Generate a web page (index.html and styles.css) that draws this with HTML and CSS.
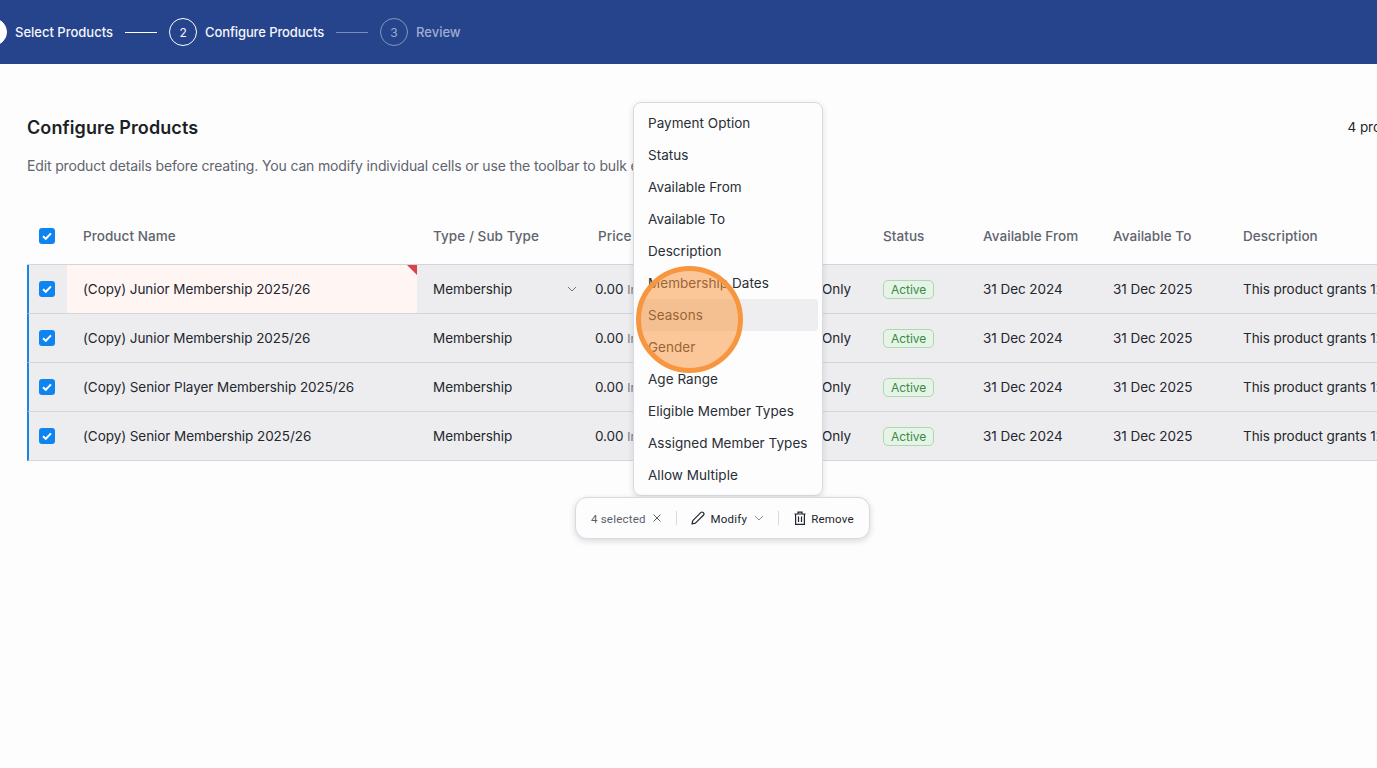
FILE: index.html
```html
<!DOCTYPE html>
<html lang="en">
<head>
<meta charset="utf-8">
<title>Configure Products</title>
<link rel="stylesheet" href="styles.css">
</head>
<body>
<header class="topbar">
  <ol class="stepper">
    <li class="step done"><span class="step-dot"><svg width="14" height="14" viewBox="0 0 14 14"><path d="M3 7l3 3 5-6" fill="none" stroke="#26448c" stroke-width="1.6"/></svg></span><span>Select Products</span></li>
    <li class="step-line"></li>
    <li class="step current"><span class="step-dot">2</span><span>Configure Products</span></li>
    <li class="step-line dim"></li>
    <li class="step upcoming"><span class="step-dot">3</span><span>Review</span></li>
  </ol>
</header>
<main class="content">
  <div class="title-row">
    <h1>Configure Products</h1>
    <span class="count">4 products</span>
  </div>
  <p class="lead">Edit product details before creating. You can modify individual cells or use the toolbar to bulk edit.</p>
  <table class="grid">
    <colgroup><col class="c-check"><col class="c-name"><col class="c-type"><col class="c-price"><col class="c-pay"><col class="c-status"><col class="c-date"><col class="c-date"><col class="c-desc"></colgroup>
    <thead>
      <tr>
        <th><span class="check"><svg width="16" height="16" viewBox="0 0 16 16"><path d="M4 8.2l2.8 2.6L12 5.4" fill="none" stroke="#fff" stroke-width="2"/></svg></span></th>
        <th>Product Name</th><th>Type / Sub Type</th><th>Price</th><th>Payment Option</th><th>Status</th><th>Available From</th><th>Available To</th><th>Description</th>
      </tr>
    </thead>
    <tbody>
      <tr>
        <td><span class="check"><svg width="16" height="16" viewBox="0 0 16 16"><path d="M4 8.2l2.8 2.6L12 5.4" fill="none" stroke="#fff" stroke-width="2"/></svg></span></td>
        <td class="invalid">(Copy) Junior Membership 2025/26<span class="flag"></span></td>
        <td><span class="type-cell">Membership<svg width="10" height="6" viewBox="0 0 10 6"><path d="M1 1l4 4 4-4" fill="none" stroke="#70757e" stroke-width="1"/></svg></span></td>
        <td class="price">0.00 <small>Incl. VAT</small></td>
        <td class="pay">One-time Only</td>
        <td><span class="badge">Active</span></td>
        <td>31 Dec 2024</td><td>31 Dec 2025</td><td>This product grants 12 months of access</td>
      </tr>
      <tr>
        <td><span class="check"><svg width="16" height="16" viewBox="0 0 16 16"><path d="M4 8.2l2.8 2.6L12 5.4" fill="none" stroke="#fff" stroke-width="2"/></svg></span></td>
        <td>(Copy) Junior Membership 2025/26</td>
        <td>Membership</td>
        <td class="price">0.00 <small>Incl. VAT</small></td>
        <td class="pay">One-time Only</td>
        <td><span class="badge">Active</span></td>
        <td>31 Dec 2024</td><td>31 Dec 2025</td><td>This product grants 12 months of access</td>
      </tr>
      <tr>
        <td><span class="check"><svg width="16" height="16" viewBox="0 0 16 16"><path d="M4 8.2l2.8 2.6L12 5.4" fill="none" stroke="#fff" stroke-width="2"/></svg></span></td>
        <td>(Copy) Senior Player Membership 2025/26</td>
        <td>Membership</td>
        <td class="price">0.00 <small>Incl. VAT</small></td>
        <td class="pay">One-time Only</td>
        <td><span class="badge">Active</span></td>
        <td>31 Dec 2024</td><td>31 Dec 2025</td><td>This product grants 12 months of access</td>
      </tr>
      <tr>
        <td><span class="check"><svg width="16" height="16" viewBox="0 0 16 16"><path d="M4 8.2l2.8 2.6L12 5.4" fill="none" stroke="#fff" stroke-width="2"/></svg></span></td>
        <td>(Copy) Senior Membership 2025/26</td>
        <td>Membership</td>
        <td class="price">0.00 <small>Incl. VAT</small></td>
        <td class="pay">One-time Only</td>
        <td><span class="badge">Active</span></td>
        <td>31 Dec 2024</td><td>31 Dec 2025</td><td>This product grants 12 months of access</td>
      </tr>
    </tbody>
  </table>
</main>
<ul class="menu">
  <li>Payment Option</li>
  <li>Status</li>
  <li>Available From</li>
  <li>Available To</li>
  <li>Description</li>
  <li>Membership Dates</li>
  <li class="hover">Seasons</li>
  <li>Gender</li>
  <li>Age Range</li>
  <li>Eligible Member Types</li>
  <li>Assigned Member Types</li>
  <li>Allow Multiple</li>
</ul>
<div class="toolbar">
  <span class="selected">4 selected</span>
  <svg class="close" width="10" height="10" viewBox="0 0 10 10"><path d="M1.5 1.5l7 7M8.5 1.5l-7 7" stroke="#5b606a" stroke-width="1" fill="none"/></svg>
  <span class="sep"></span>
  <svg class="pencil" width="14" height="14" viewBox="0 0 14 14"><path d="M1 13l.8-3.4L10 1.4a1.4 1.4 0 0 1 2 0l.6.6a1.4 1.4 0 0 1 0 2L4.4 12.2 1 13z" fill="none" stroke="#22262c" stroke-width="1.2" stroke-linejoin="round"/></svg>
  <span class="action">Modify</span>
  <svg class="chev" width="10" height="6" viewBox="0 0 10 6"><path d="M1 1l4 4 4-4" fill="none" stroke="#8a8f98" stroke-width="1"/></svg>
  <span class="sep wide"></span>
  <svg class="trash" width="12" height="14" viewBox="0 0 12 14"><path d="M.5 3h11M4 3V1.2h4V3M1.6 3v10.3h8.8V3M4.5 5.5v5.5M7.5 5.5v5.5" fill="none" stroke="#22262c" stroke-width="1.2"/></svg>
  <span class="action">Remove</span>
</div>
<div class="spotlight"></div>
</body>
</html>
```
FILE: styles.css
```css
* { box-sizing: border-box; }
html, body { margin: 0; height: 100%; }
body {
  background: #fdfdfe;
  color: #24272d;
  font-family: Inter, "Liberation Sans", sans-serif;
  font-size: 13.5px;
  letter-spacing: -.06px;
  overflow: hidden;
  position: relative;
}
.topbar {
  height: 64px;
  background: #26448c;
  display: flex;
  align-items: center;
}
.stepper {
  list-style: none;
  margin: 0 0 0 -21px;
  padding: 0;
  display: flex;
  align-items: center;
  gap: 12px;
}
.step {
  display: flex;
  align-items: center;
  gap: 8px;
  font-size: 13px;
  letter-spacing: 0;
  font-weight: 450;
  color: #f4f6fb;
}
.step.current { letter-spacing: -.1px; }
.step-dot {
  width: 28px;
  height: 28px;
  border-radius: 50%;
  border: 1px solid #fff;
  display: flex;
  align-items: center;
  justify-content: center;
  font-size: 12px;
  font-weight: 400;
}
.done .step-dot { background: #fff; }
.upcoming { color: #9fadd0; }
.upcoming .step-dot { border-color: #8796c0; }
.step-line { width: 32px; height: 1px; background: #fff; }
.step-line.dim { background: #7d8dba; }
.content { padding: 52px 0 0 27px; width: 1700px; }
.title-row {
  display: flex;
  width: 1389px;
  justify-content: space-between;
  align-items: center;
  height: 22px;
}
h1 { margin: 0; font-size: 18px; font-weight: 600; letter-spacing: .1px; color: #1c1f24; }
.count { white-space: nowrap; }
.lead { margin: 18px 0 0; font-size: 14px; letter-spacing: -.15px; line-height: 20px; color: #5f646d; }
.grid {
  margin-top: 39px;
  border-collapse: separate;
  border-spacing: 0;
  table-layout: fixed;
  width: 1500px;
}
.c-check { width: 40px; }
.c-name { width: 350px; }
.c-type { width: 165px; }
.c-price { width: 108px; }
.c-pay { width: 177px; }
.c-status { width: 100px; }
.c-date { width: 130px; }
.c-desc { width: 300px; }
th, td {
  padding: 0 16px;
  text-align: left;
  white-space: nowrap;
  overflow: hidden;
}
th {
  height: 50px;
  padding-bottom: 8px;
  font-weight: 500;
  letter-spacing: .06px;
  color: #5f646d;
  border-bottom: 1px solid #d2d5da;
}
td {
  height: 49px;
  background: #ededf0;
  border-bottom: 1px solid #d2d5da;
}
th:first-child, td:first-child { padding-left: 12px; padding-right: 0; }
td:first-child { border-left: 2px solid #1a86e0; padding-left: 10px; }
.check {
  display: block;
  width: 16px;
  height: 16px;
  border-radius: 3px;
  background: #0d84f0;
}
.check svg { display: block; }
td.invalid { background: #fff5f3; position: relative; }
.flag {
  position: absolute;
  top: 0;
  right: 0;
  border-top: 10px solid #d9434e;
  border-left: 10px solid transparent;
}
.type-cell {
  display: flex;
  justify-content: space-between;
  align-items: center;
  margin-right: -11px;
}
.price { padding-left: 13px; }
.price small { font-size: 12px; color: #70757e; }
.pay { text-align: right; }
.badge {
  display: inline-block;
  height: 19px;
  line-height: 17px;
  padding: 0 7px;
  border: 1px solid #a9d9ac;
  border-radius: 5px;
  background: #e6f4e7;
  color: #3a8a45;
  font-size: 12px;
  vertical-align: middle;
}
.menu {
  position: absolute;
  left: 633px;
  top: 102px;
  width: 190px;
  height: 394px;
  margin: 0;
  padding: 4px;
  list-style: none;
  background: #fdfdfe;
  border: 1px solid #d8dade;
  border-radius: 8px;
  box-shadow: 0 2px 6px rgba(20, 25, 40, .12);
  letter-spacing: .04px;
}
.menu li {
  height: 32px;
  line-height: 32px;
  padding-left: 10px;
  border-radius: 4px;
  white-space: nowrap;
  color: #2a2e35;
}
.menu .hover { background: #eeeef0; }
.toolbar {
  position: absolute;
  left: 575px;
  top: 497px;
  width: 295px;
  height: 42px;
  display: flex;
  align-items: center;
  padding-left: 15px;
  background: #fdfdfe;
  border: 1px solid #d8dade;
  border-radius: 12px;
  box-shadow: 0 2px 6px rgba(20, 25, 40, .16);
  font-family: Roboto, sans-serif;
  font-size: 11.5px;
  letter-spacing: .2px;
}
.selected { color: #5b606a; margin-top: 2px; }
.close { margin-left: 6px; }
.sep { width: 1px; height: 14px; background: #d8dade; margin: 0 14px; }
.sep.wide { margin-right: 15px; }
.pencil { margin-right: 6px; }
.action { color: #22262c; margin-top: 2px; }
.chev { margin-left: 7px; }
.trash { margin-right: 5px; }
.spotlight {
  position: absolute;
  left: 636px;
  top: 266px;
  width: 107px;
  height: 107px;
  border-radius: 50%;
  border: 5px solid #f7963f;
  background: rgba(250, 150, 60, .53);
}
```
